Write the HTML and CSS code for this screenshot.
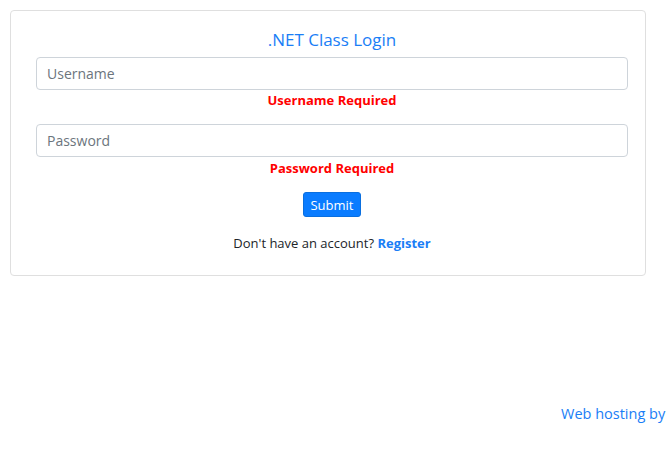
FILE: index.html
```html
<!DOCTYPE html>
<html>
<head>
<meta charset="utf-8">
<link rel="stylesheet" href="styles.css">
</head>
<body>
<div class="card">
  <h2 class="title">.NET Class Login</h2>
  <form class="form">
    <input class="field" type="text" placeholder="Username">
    <div class="error">Username Required</div>
    <input class="field field-second" type="password" placeholder="Password">
    <div class="error error-second">Password Required</div>
    <div class="actions"><button class="btn" type="button">Submit</button></div>
    <p class="signup">Don't have an account? <a class="link" href="#">Register</a></p>
  </form>
</div>
<div class="hosting"><a href="#">Web hosting by</a></div>
</body>
</html>
```

FILE: styles.css
```css
html, body {
  overflow: hidden;
}
body {
  margin: 0;
  padding: 10px;
  width: 668px;
  height: 449px;
  box-sizing: border-box;
  font-family: "Open Sans", "Noto Sans", sans-serif;
  color: #212529;
  position: relative;
}
.card {
  width: 636px;
  box-sizing: border-box;
  border: 1px solid #dfdfdf;
  border-radius: 4px;
  padding: 18px 17px 21px 25px;
}
.title {
  margin: 0 0 6px;
  text-align: center;
  font-size: 17px;
  font-weight: 500;
  line-height: 22px;
  color: #1a7ef6;
}
.form {
  display: flex;
  flex-direction: column;
  margin: 0;
}
.field {
  height: 33px;
  box-sizing: border-box;
  border: 1px solid #ced4da;
  border-radius: 4px;
  padding: 0 10px;
  font-family: inherit;
  font-size: 14px;
  color: #495057;
  margin: 0;
}
.field::placeholder {
  color: #6c757d;
}
.field-second {
  margin-top: 13px;
}
.error {
  margin-top: 0;
  text-align: center;
  color: #ff0000;
  font-weight: 700;
  font-size: 13px;
  line-height: 21px;
}
.error-second {
  margin-top: 1px;
}
.actions {
  display: flex;
  justify-content: center;
  margin-top: 13px;
}
.btn {
  height: 25px;
  padding: 0 6px;
  background: #0a7cff;
  border: 1px solid #0a6fdf;
  border-radius: 3px;
  color: #fff;
  font-family: inherit;
  font-size: 13px;
}
.signup {
  margin: 16px 0 0;
  text-align: center;
  font-size: 13px;
  line-height: 21px;
}
.link {
  color: #1a7ef6;
  font-weight: 700;
  text-decoration: none;
}
.hosting {
  position: absolute;
  left: 561px;
  top: 403px;
  white-space: nowrap;
  font-size: 14.5px;
  line-height: 22px;
}
.hosting a {
  color: #1a7ef6;
  text-decoration: none;
}
```
